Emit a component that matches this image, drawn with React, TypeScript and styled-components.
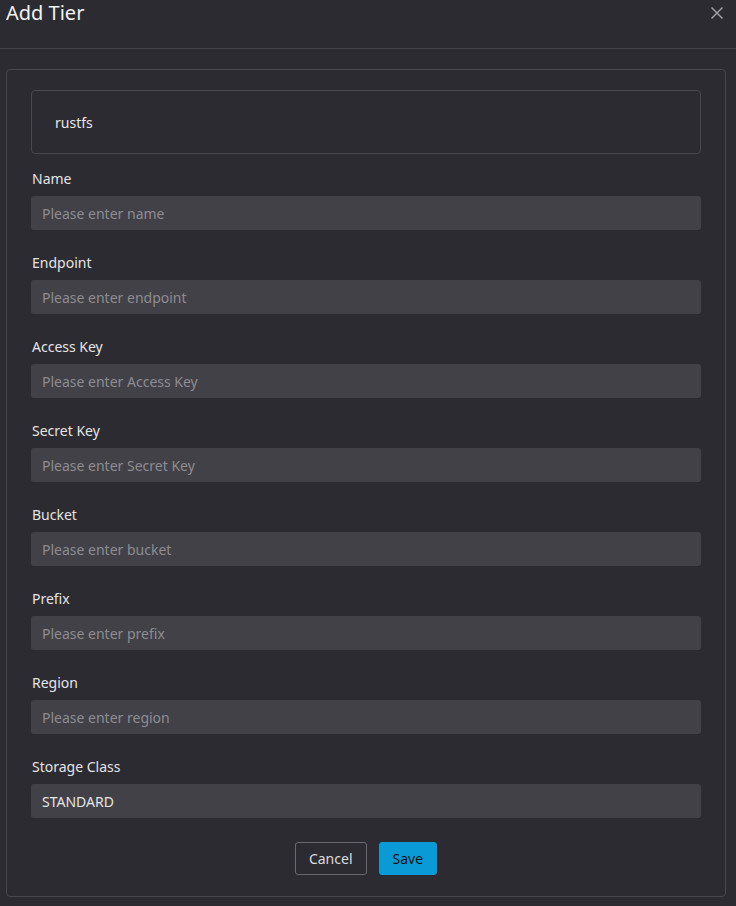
import React from "react";
import styled, { createGlobalStyle } from "styled-components";

const Global = createGlobalStyle`
  html, body {
    margin: 0;
    padding: 0;
    background: #2c2b31;
  }
  body {
    font-family: "Noto Sans", "Open Sans", sans-serif;
    color: #e4e4e6;
  }
  * { box-sizing: border-box; }
`;

const Page = styled.div`
  width: 736px;
  min-height: 906px;
  background: #2c2b31;
  padding-bottom: 10px;
`;

const Header = styled.div`
  display: flex;
  justify-content: space-between;
  align-items: flex-start;
  height: 49px;
  border-bottom: 1px solid #45444a;
  padding-left: 6px;
`;

const Title = styled.h2`
  margin: 0;
  font-size: 20px;
  line-height: 26px;
  font-weight: 400;
  color: #f2f2f3;
`;

const CloseButton = styled.button`
  margin: 7px 13px 0 0;
  width: 12px;
  height: 12px;
  padding: 0;
  border: none;
  background: transparent;
  display: flex;
  cursor: pointer;
`;

const Card = styled.div`
  margin: 20px 0 0 6px;
  width: 720px;
  border: 1px solid #47464c;
  border-radius: 4px;
  padding: 20px 24px 21px;
  display: flex;
  flex-direction: column;
`;

const TypeBox = styled.div`
  height: 64px;
  border: 1px solid #48474d;
  border-radius: 4px;
  display: flex;
  align-items: center;
  padding: 0 23px;
  font-size: 14px;
  color: #e6e6e8;
  margin-bottom: 15px;
`;

const Fields = styled.div`
  display: flex;
  flex-direction: column;
  gap: 23px;
`;

const Field = styled.div`
  display: flex;
  flex-direction: column;
`;

const Label = styled.label`
  font-size: 14px;
  line-height: 20px;
  color: #e4e4e6;
  padding-left: 1px;
  margin-bottom: 7px;
`;

const Input = styled.input`
  height: 34px;
  border: none;
  border-radius: 3px;
  background: #424147;
  color: #e4e4e6;
  font-family: "Noto Sans", "Open Sans", sans-serif;
  font-size: 14px;
  padding: 0 11px;
  outline: none;
  &::placeholder {
    color: #8d8c92;
  }
`;

const Actions = styled.div`
  display: flex;
  justify-content: center;
  gap: 12px;
  margin-top: 24px;
`;

const Button = styled.button<{ $primary?: boolean }>`
  height: 33px;
  padding: 0 13px;
  border-radius: 3px;
  font-family: "Noto Sans", "Open Sans", sans-serif;
  font-size: 14px;
  cursor: pointer;
  border: 1px solid ${(p) => (p.$primary ? "#0a9ad6" : "#6a696f")};
  background: ${(p) => (p.$primary ? "#0a9ad6" : "transparent")};
  color: ${(p) => (p.$primary ? "#141418" : "#dcdcde")};
`;

const fields = [
  { label: "Name", placeholder: "Please enter name" },
  { label: "Endpoint", placeholder: "Please enter endpoint" },
  { label: "Access Key", placeholder: "Please enter Access Key" },
  { label: "Secret Key", placeholder: "Please enter Secret Key" },
  { label: "Bucket", placeholder: "Please enter bucket" },
  { label: "Prefix", placeholder: "Please enter prefix" },
  { label: "Region", placeholder: "Please enter region" },
];

export default function App() {
  return (
    <Page>
      <Global />
      <Header>
        <Title>Add Tier</Title>
        <CloseButton aria-label="Close">
          <svg width="12" height="12" viewBox="0 0 12 12">
            <path d="M0.5 0.5 L11.5 11.5 M11.5 0.5 L0.5 11.5" stroke="#a09fa4" strokeWidth="1.5" fill="none" />
          </svg>
        </CloseButton>
      </Header>
      <Card>
        <TypeBox>rustfs</TypeBox>
        <Fields>
          {fields.map((f) => (
            <Field key={f.label}>
              <Label>{f.label}</Label>
              <Input placeholder={f.placeholder} />
            </Field>
          ))}
          <Field>
            <Label>Storage Class</Label>
            <Input defaultValue="STANDARD" />
          </Field>
        </Fields>
        <Actions>
          <Button>Cancel</Button>
          <Button $primary>Save</Button>
        </Actions>
      </Card>
    </Page>
  );
}
